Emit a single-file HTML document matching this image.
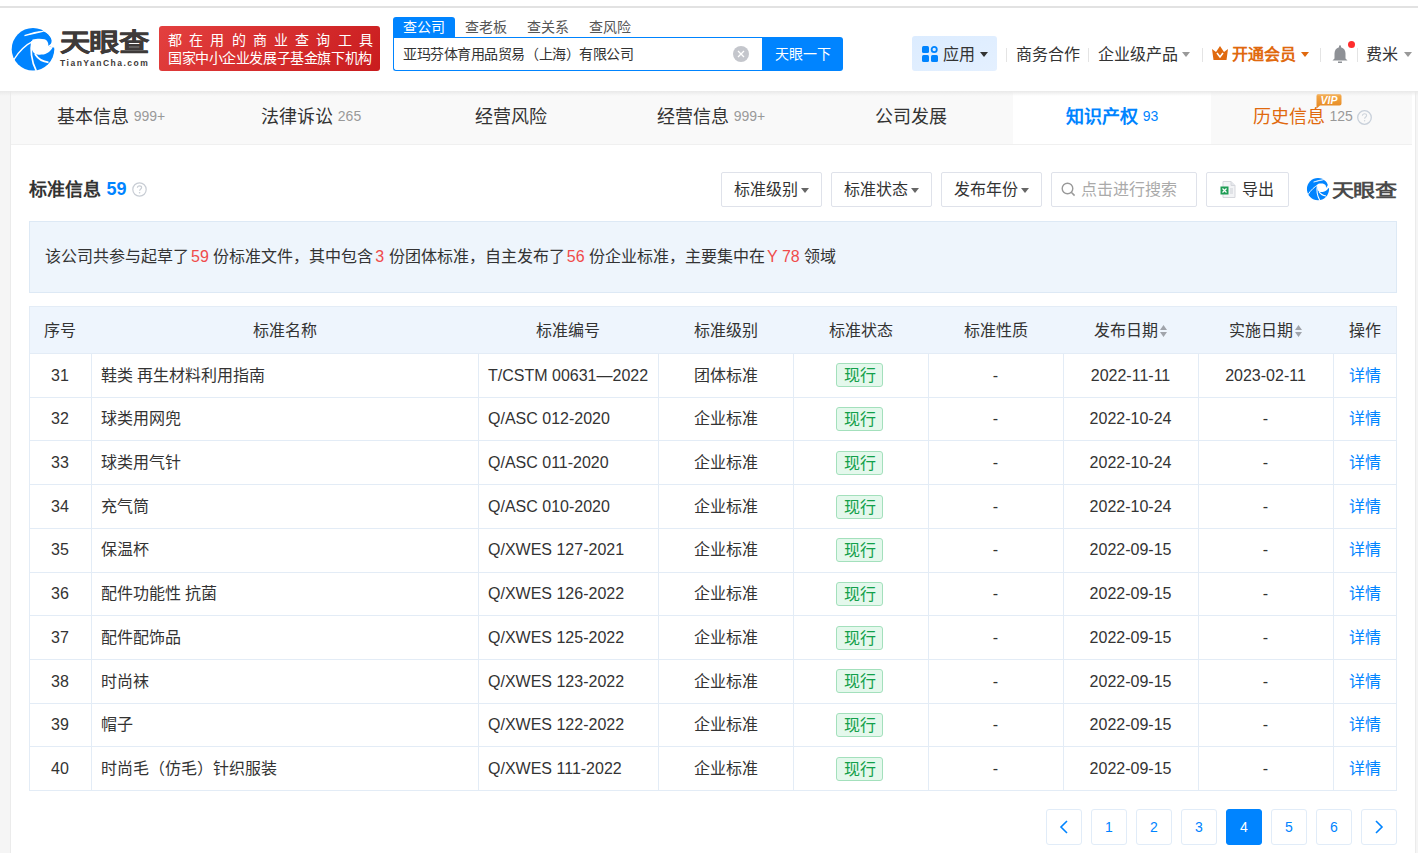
<!DOCTYPE html>
<html lang="zh-CN"><head><meta charset="utf-8">
<style>
*{box-sizing:border-box;margin:0;padding:0}
html,body{width:1418px;height:853px;overflow:hidden;background:#f5f5f5;font-family:"Liberation Sans",sans-serif;color:#333}
.abs{position:absolute}
#top{position:absolute;left:0;top:0;width:1418px;height:6px;background:#fff}
#topline{position:absolute;left:0;top:6px;width:1418px;height:2px;background:#e2e2e2}
#header{position:absolute;left:0;top:8px;width:1418px;height:83px;background:#fff}
#hshadow{position:absolute;left:0;top:91px;width:1418px;height:5px;background:linear-gradient(#e9e9e9,rgba(240,240,240,0));z-index:5}
#card{position:absolute;left:10px;top:91px;width:1406px;height:800px;background:#fff;border-left:1px solid #ebebeb;border-right:1px solid #ebebeb}
#tabs{position:absolute;left:11px;top:91px;width:1401px;height:54px;background:#f9f9f9;border-bottom:1px solid #f0f0f0}
.tab{position:absolute;top:0;height:53px;width:200px;text-align:center;line-height:52px;font-size:18px;color:#333;white-space:nowrap}
.tab .n{font-size:14px;color:#999;margin-left:5px;position:relative;top:-2px}
.tab.act{background:#fff;color:#0084ff;font-weight:bold}
.tab.act .n{color:#0084ff;font-weight:normal}
.fbtn{position:absolute;top:172px;height:35px;border:1px solid #dfe2ea;border-radius:2px;background:#fff;font-size:16px;line-height:34px;color:#333;text-align:center;white-space:nowrap}
.fbtn svg{vertical-align:middle;margin-left:3px;position:relative;top:0px}
.red{color:#f04b4b;margin-left:-2.4px}
.th{position:absolute;top:306.7px;height:47px;line-height:47px;text-align:center;font-size:16px;color:#333;white-space:nowrap}
.th .sort{vertical-align:middle;margin-left:2.5px;position:relative;top:-0.5px}
.hl{position:absolute;left:29px;width:1368px;height:1px;background:#e3ecf6}
.vl{position:absolute;width:1px;background:#e3ecf6}
.td{position:absolute;text-align:center;font-size:16px;color:#333;white-space:nowrap;margin-top:0.7px}
.td.tl{text-align:left;padding-left:10px}
.badge{display:inline-block;width:47px;height:24px;line-height:24px;border:1px solid #a3e0bc;background:#e4f8ec;border-radius:3px;color:#12a04a;font-size:16px;vertical-align:middle;position:relative;top:-1px;left:-1px}
.lnk{color:#0084ff}
.pg{position:absolute;top:809px;width:36px;height:36px;border:1px solid #e1ecf8;border-radius:3px;background:#fff;color:#0084ff;font-size:14px;line-height:34px;text-align:center}
.pg svg{vertical-align:middle;position:relative;top:-1px}
.pg.act{background:#0084ff;color:#fff;border-color:#0084ff}
</style></head>
<body>
<div id="top"></div><div id="topline"></div>
<div id="header">
  <svg class="abs" style="left:8px;top:16px" width="50" height="50" viewBox="0 0 50 50">
    <circle cx="25" cy="25.2" r="21.3" fill="#0084ff"/>
    <path d="M35.2 7.3 C40 9 43.3 12.5 43.6 16.5 C43.8 19 42.5 20.8 40.4 21.7 L44.6 23.4 L49 23.4 L49 3 L35.2 3 Z" fill="#fff"/>
    <path d="M24.6 15.5 C28 14.6 33 14.3 36.5 15.2 C39 16 40.5 18 40.4 21.7 L44.6 23.4 C42.5 27.5 38.5 30.2 34 30.6 C31 30.8 28.5 30.5 27.3 30.2 C25 28.5 23.4 26 23.4 22 C23.4 19.5 23.8 17 24.6 15.5 Z" fill="#fff"/>
    <path d="M16.5 11.6 C23 9.2 29 7.6 35.5 7.2 C29 8.6 23 10.2 16.5 11.6 Z" stroke="#fff" stroke-width="1.1" fill="#fff"/>
    <path d="M25.8 16.8 C19 20 11 27 5.6 36" stroke="#fff" stroke-width="1.4" fill="none"/>
    <path d="M24 17.2 C22.3 25 23 37 28.3 46.8" stroke="#fff" stroke-width="1.7" fill="none"/>
    <path d="M27 30 C30 34.8 35 37.8 40.5 38.3" stroke="#fff" stroke-width="1.8" fill="none"/>
  </svg>
  <div class="abs" id="logotxt" style="left:59.6px;top:21.4px;font-size:30px;font-weight:900;-webkit-text-stroke:0.5px #3e3a39;color:#3e3a39;line-height:34px;letter-spacing:-1px;transform:scale(1.0115,0.828);transform-origin:0 0">天眼查</div>
  <div class="abs" id="logocom" style="left:60px;top:50px;font-size:8.5px;font-weight:bold;color:#3e3a39;line-height:10px;letter-spacing:1.5px">TianYanCha.com</div>
  <div class="abs" id="banner" style="left:159px;top:18px;width:221px;height:45px;border-radius:3px;background:linear-gradient(135deg,#e3403f,#c91c1e)">
    <div class="abs" style="left:9px;top:5.5px;font-size:14px;line-height:17px;color:#fff;letter-spacing:7.2px;font-weight:500;white-space:nowrap">都在用的商业查询工具</div>
    <div class="abs" style="left:9px;top:24.3px;font-size:14px;letter-spacing:-0.42px;line-height:17px;color:#fff;font-weight:500;white-space:nowrap">国家中小企业发展子基金旗下机构</div>
  </div>
  <div class="abs" style="left:393px;top:9px;width:62px;height:20px;background:#0084ff;border-radius:3px 3px 0 0;color:#fff;font-size:14px;line-height:20px;text-align:center">查公司</div>
  <div class="abs" style="left:465px;top:9px;font-size:14px;line-height:20px;color:#555">查老板</div>
  <div class="abs" style="left:527px;top:9px;font-size:14px;line-height:20px;color:#555">查关系</div>
  <div class="abs" style="left:589px;top:9px;font-size:14px;line-height:20px;color:#555">查风险</div>
  <div class="abs" style="left:393px;top:29px;width:370px;height:34px;border:1px solid #0084ff;border-right:none;border-radius:0 0 0 3px;background:#fff">
    <div class="abs" style="left:9px;top:0;font-size:14px;letter-spacing:-0.45px;line-height:32px;color:#333;white-space:nowrap">亚玛芬体育用品贸易（上海）有限公司</div>
    <div class="abs" style="left:339px;top:8px;width:16px;height:16px;border-radius:50%;background:#c4c6cc"></div>
    <svg class="abs" style="left:339px;top:8px" width="16" height="16" viewBox="0 0 16 16"><path d="M5 5L11 11M11 5L5 11" stroke="#fff" stroke-width="1.3"/></svg>
  </div>
  <div class="abs" style="left:762px;top:29px;width:81px;height:34px;background:#0084ff;border-radius:0 3px 3px 0;color:#fff;font-size:14px;line-height:34px;text-align:center">天眼一下</div>

  <div class="abs" style="left:912px;top:28px;width:85px;height:35px;border-radius:3px;background:linear-gradient(160deg,#dcecff,#e4f0ff)"></div>
  <svg class="abs" style="left:922px;top:38px" width="16" height="16" viewBox="0 0 16 16">
    <rect x="0" y="0" width="7" height="7" rx="1.5" fill="#0084ff"/>
    <circle cx="12.2" cy="3.5" r="2.6" fill="none" stroke="#0084ff" stroke-width="1.8"/>
    <rect x="0" y="9" width="7" height="7" rx="1.5" fill="#0084ff"/>
    <rect x="9" y="9" width="7" height="7" rx="1.5" fill="#0084ff"/>
  </svg>
  <div class="abs" style="left:943px;top:35.5px;font-size:16px;line-height:22px;color:#333">应用</div>
  <svg class="abs" style="left:980px;top:44px" width="8" height="5" viewBox="0 0 8 5"><path d="M0 0H8L4 5Z" fill="#333"/></svg>
  <div class="abs" style="left:1006px;top:40px;width:1px;height:14px;background:#e4e4e4"></div>
  <div class="abs" style="left:1016px;top:35.5px;font-size:16px;line-height:22px;color:#333">商务合作</div>
  <div class="abs" style="left:1088px;top:40px;width:1px;height:14px;background:#e4e4e4"></div>
  <div class="abs" style="left:1098px;top:35.5px;font-size:16px;line-height:22px;color:#333">企业级产品</div>
  <svg class="abs" style="left:1182px;top:44px" width="8" height="5" viewBox="0 0 8 5"><path d="M0 0H8L4 5Z" fill="#999"/></svg>
  <div class="abs" style="left:1202px;top:40px;width:1px;height:14px;background:#e4e4e4"></div>
  <svg class="abs" style="left:1212px;top:38px" width="16" height="14" viewBox="0 0 16 14">
    <path d="M0 3L4 6L8 0L12 6L16 3L14.5 14H1.5Z" fill="#e0690e"/>
    <path d="M5 7L8 11L11 7" stroke="#fff" stroke-width="1.6" fill="none"/>
  </svg>
  <div class="abs" style="left:1232px;top:35.5px;font-size:16px;line-height:22px;color:#e0690e;font-weight:bold">开通会员</div>
  <svg class="abs" style="left:1301px;top:44px" width="8" height="5" viewBox="0 0 8 5"><path d="M0 0H8L4 5Z" fill="#e0690e"/></svg>
  <div class="abs" style="left:1320px;top:40px;width:1px;height:14px;background:#e4e4e4"></div>
  <svg class="abs" style="left:1332px;top:37px" width="16" height="18" viewBox="0 0 16 18">
    <path d="M7 0.5H9V2.2C12 3 13.5 5.5 13.5 8.5V13.5L15.5 15.5H0.5L2.5 13.5V8.5C2.5 5.5 4 3 7 2.2Z" fill="#8e9196"/>
    <rect x="6" y="16.5" width="4" height="1.5" fill="#8e9196"/>
  </svg>
  <div class="abs" style="left:1348px;top:33px;width:7px;height:7px;border-radius:50%;background:#ff2d2d"></div>
  <div class="abs" style="left:1357px;top:40px;width:1px;height:14px;background:#e4e4e4"></div>
  <div class="abs" style="left:1366px;top:35.5px;font-size:16px;line-height:22px;color:#333">费米</div>
  <svg class="abs" style="left:1404px;top:44px" width="8" height="5" viewBox="0 0 8 5"><path d="M0 0H8L4 5Z" fill="#999"/></svg>
</div>
<div id="card"></div>
<div id="tabs">
  <div class="tab" style="left:0">基本信息<span class="n">999+</span></div>
  <div class="tab" style="left:200px">法律诉讼<span class="n">265</span></div>
  <div class="tab" style="left:400px">经营风险</div>
  <div class="tab" style="left:600px">经营信息<span class="n">999+</span></div>
  <div class="tab" style="left:800px">公司发展</div>
  <div class="tab act" style="left:1002px;width:198px">知识产权<span class="n">93</span></div>
  <div class="tab" style="left:1200px;color:#e0690e;text-align:left;padding-left:41.5px">历史信息<span class="n">125</span><svg style="position:absolute;left:145.5px;top:18.5px" width="15" height="15" viewBox="0 0 15 15"><circle cx="7.5" cy="7.5" r="6.8" fill="none" stroke="#c8d0da" stroke-width="1.3"/><path d="M5.4 5.8C5.4 4.6 6.3 3.8 7.5 3.8C8.7 3.8 9.6 4.6 9.6 5.6C9.6 6.9 7.6 7.1 7.6 8.8" stroke="#cfd5dc" stroke-width="1.1" fill="none"/><circle cx="7.6" cy="10.8" r="0.7" fill="#cfd5dc"/></svg>
  <svg style="position:absolute;left:104px;top:3px" width="27" height="15" viewBox="0 0 27 15"><defs><linearGradient id="vg" x1="0" y1="0" x2="0" y2="1"><stop offset="0" stop-color="#f5aa4a"/><stop offset="1" stop-color="#e4861f"/></linearGradient></defs><path d="M3 0H24.5Q26.5 0 26.5 2V9.5Q26.5 11.5 24.5 11.5H5L1.5 14.5V2Q1.5 0 3 0Z" fill="url(#vg)"/><text x="14" y="9.6" text-anchor="middle" font-family="Liberation Sans" font-weight="bold" font-style="italic" font-size="10.5" fill="#fff">VIP</text></svg></div>
</div>
<div class="abs" style="left:28.5px;top:177.5px;font-size:18px;font-weight:bold;line-height:24px;color:#333;white-space:nowrap">标准信息</div>
<div class="abs" style="left:106.5px;top:176.5px;font-size:18px;font-weight:bold;line-height:24px;color:#0084ff">59</div>
<svg class="abs" style="left:131.5px;top:181.5px" width="15" height="15" viewBox="0 0 15 15"><circle cx="7.5" cy="7.5" r="6.7" fill="none" stroke="#c8cdd4" stroke-width="1.2"/><path d="M5.4 5.8C5.4 4.6 6.3 3.8 7.5 3.8C8.7 3.8 9.6 4.6 9.6 5.6C9.6 6.9 7.6 7.1 7.6 8.8" stroke="#c8cdd4" stroke-width="1.2" fill="none"/><circle cx="7.6" cy="10.8" r="0.8" fill="#c8cdd4"/></svg>

<div class="fbtn" style="left:721px;width:101px">标准级别<svg width="8" height="5" viewBox="0 0 8 5"><path d="M0 0H8L4 5Z" fill="#666"/></svg></div>
<div class="fbtn" style="left:831px;width:101px">标准状态<svg width="8" height="5" viewBox="0 0 8 5"><path d="M0 0H8L4 5Z" fill="#666"/></svg></div>
<div class="fbtn" style="left:941px;width:101px">发布年份<svg width="8" height="5" viewBox="0 0 8 5"><path d="M0 0H8L4 5Z" fill="#666"/></svg></div>
<div class="abs" style="left:1051px;top:172px;width:146px;height:35px;border:1px solid #dfe2ea;border-radius:2px;background:#fff"></div>
<svg class="abs" style="left:1061px;top:182px" width="15" height="15" viewBox="0 0 15 15"><circle cx="6.5" cy="6.5" r="5.3" fill="none" stroke="#999" stroke-width="1.4"/><path d="M10.3 10.3L13.6 13.6" stroke="#999" stroke-width="1.5"/></svg>
<div class="abs" style="left:1081px;top:179px;font-size:16px;line-height:22px;color:#aaa;white-space:nowrap">点击进行搜索</div>
<div class="abs" style="left:1206px;top:172px;width:83px;height:35px;border:1px solid #dfe2ea;border-radius:2px;background:#fff"></div>
<svg class="abs" style="left:1220px;top:181px" width="16" height="17" viewBox="0 0 16 17">
  <path d="M3 0.5H11L15 4.5V16.5H3Z" fill="#f3f4f6" stroke="#d5d7dc" stroke-width="1"/>
  <path d="M11 0.5V4.5H15" fill="#e4e6ea" stroke="#d5d7dc" stroke-width="1"/>
  <rect x="0.5" y="5.5" width="8" height="8" fill="#1f9d55"/>
  <path d="M2.5 7.5L6.5 11.5M6.5 7.5L2.5 11.5" stroke="#fff" stroke-width="1.2"/>
  <path d="M10 8H13M10 10H13M10 12H13" stroke="#c9ccd2" stroke-width="0.9"/>
</svg>
<div class="abs" style="left:1242px;top:179px;font-size:16px;line-height:22px;color:#333">导出</div>
<svg class="abs" style="left:1305px;top:176px" width="26" height="26" viewBox="0 0 50 50">
    <circle cx="25" cy="25.2" r="21.3" fill="#0084ff"/>
    <path d="M35.2 7.3 C40 9 43.3 12.5 43.6 16.5 C43.8 19 42.5 20.8 40.4 21.7 L44.6 23.4 L49 23.4 L49 3 L35.2 3 Z" fill="#fff"/>
    <path d="M24.6 15.5 C28 14.6 33 14.3 36.5 15.2 C39 16 40.5 18 40.4 21.7 L44.6 23.4 C42.5 27.5 38.5 30.2 34 30.6 C31 30.8 28.5 30.5 27.3 30.2 C25 28.5 23.4 26 23.4 22 C23.4 19.5 23.8 17 24.6 15.5 Z" fill="#fff"/>
    <path d="M16.5 11.6 C23 9.2 29 7.6 35.5 7.2 C29 8.6 23 10.2 16.5 11.6 Z" stroke="#fff" stroke-width="1.1" fill="#fff"/>
    <path d="M25.8 16.8 C19 20 11 27 5.6 36" stroke="#fff" stroke-width="1.8" fill="none"/>
    <path d="M24 17.2 C22.3 25 23 37 28.3 46.8" stroke="#fff" stroke-width="2" fill="none"/>
    <path d="M27 30 C30 34.8 35 37.8 40.5 38.3" stroke="#fff" stroke-width="2" fill="none"/>
</svg>
<div class="abs" id="logo2" style="left:1332px;top:179.5px;font-size:22px;font-weight:900;line-height:26px;color:#4a4a4a;letter-spacing:-0.6px;transform:scale(1.0,0.85);transform-origin:0 0;white-space:nowrap">天眼查</div>

<div class="abs" style="left:29px;top:221px;width:1368px;height:72px;background:#eef5fc;border:1px solid #dde9f5"></div>
<div class="abs" style="left:45px;top:246px;font-size:16px;line-height:22px;color:#333;white-space:nowrap">该公司共参与起草了 <span class="red">59</span> 份标准文件，其中包含 <span class="red">3</span> 份团体标准，自主发布了 <span class="red">56</span> 份企业标准，主要集中在 <span class="red">Y 78</span> 领域</div>

<div class="abs" style="left:29px;top:306px;width:1368px;height:47px;background:#eef5fd"></div>
<div class="th" style="left:29px;width:62px">序号</div>
<div class="th" style="left:91px;width:387px">标准名称</div>
<div class="th" style="left:478px;width:180px">标准编号</div>
<div class="th" style="left:658px;width:135px">标准级别</div>
<div class="th" style="left:793px;width:135px">标准状态</div>
<div class="th" style="left:928px;width:135px">标准性质</div>
<div class="th" style="left:1063px;width:135px">发布日期<svg class="sort" width="7" height="12" viewBox="0 0 7 12"><path d="M3.5 0L7 5H0Z M3.5 12L7 7H0Z" fill="#a0a4ab"/></svg></div>
<div class="th" style="left:1198px;width:135px">实施日期<svg class="sort" width="7" height="12" viewBox="0 0 7 12"><path d="M3.5 0L7 5H0Z M3.5 12L7 7H0Z" fill="#a0a4ab"/></svg></div>
<div class="th" style="left:1333px;width:63px">操作</div>
<div class="hl" style="top:306px"></div>
<div class="hl" style="top:353.00px"></div>
<div class="hl" style="top:396.70px"></div>
<div class="hl" style="top:440.40px"></div>
<div class="hl" style="top:484.10px"></div>
<div class="hl" style="top:527.80px"></div>
<div class="hl" style="top:571.50px"></div>
<div class="hl" style="top:615.20px"></div>
<div class="hl" style="top:658.90px"></div>
<div class="hl" style="top:702.60px"></div>
<div class="hl" style="top:746.30px"></div>
<div class="hl" style="top:790.00px"></div>
<div class="vl" style="left:29px;top:306px;height:485.00px"></div>
<div class="vl" style="left:91px;top:353px;height:438.00px"></div>
<div class="vl" style="left:478px;top:353px;height:438.00px"></div>
<div class="vl" style="left:658px;top:353px;height:438.00px"></div>
<div class="vl" style="left:793px;top:353px;height:438.00px"></div>
<div class="vl" style="left:928px;top:353px;height:438.00px"></div>
<div class="vl" style="left:1063px;top:353px;height:438.00px"></div>
<div class="vl" style="left:1198px;top:353px;height:438.00px"></div>
<div class="vl" style="left:1333px;top:353px;height:438.00px"></div>
<div class="vl" style="left:1396px;top:306px;height:485.00px"></div>
<div class="td" style="left:29px;width:62.0px;top:353.00px;height:43.7px;line-height:43.7px">31</div>
<div class="td tl" style="left:91px;width:387.0px;top:353.00px;height:43.7px;line-height:43.7px">鞋类 再生材料利用指南</div>
<div class="td tl" style="left:478px;width:180.0px;top:353.00px;height:43.7px;line-height:43.7px">T/CSTM 00631—2022</div>
<div class="td" style="left:658px;width:135.0px;top:353.00px;height:43.7px;line-height:43.7px">团体标准</div>
<div class="td" style="left:793px;width:135.0px;top:353.00px;height:43.7px;line-height:43.7px"><span class="badge">现行</span></div>
<div class="td" style="left:928px;width:135.0px;top:353.00px;height:43.7px;line-height:43.7px">-</div>
<div class="td" style="left:1063px;width:135.0px;top:353.00px;height:43.7px;line-height:43.7px">2022-11-11</div>
<div class="td" style="left:1198px;width:135.0px;top:353.00px;height:43.7px;line-height:43.7px">2023-02-11</div>
<div class="td" style="left:1333px;width:63.0px;top:353.00px;height:43.7px;line-height:43.7px"><span class="lnk">详情</span></div>
<div class="td" style="left:29px;width:62.0px;top:396.70px;height:43.7px;line-height:43.7px">32</div>
<div class="td tl" style="left:91px;width:387.0px;top:396.70px;height:43.7px;line-height:43.7px">球类用网兜</div>
<div class="td tl" style="left:478px;width:180.0px;top:396.70px;height:43.7px;line-height:43.7px">Q/ASC 012-2020</div>
<div class="td" style="left:658px;width:135.0px;top:396.70px;height:43.7px;line-height:43.7px">企业标准</div>
<div class="td" style="left:793px;width:135.0px;top:396.70px;height:43.7px;line-height:43.7px"><span class="badge">现行</span></div>
<div class="td" style="left:928px;width:135.0px;top:396.70px;height:43.7px;line-height:43.7px">-</div>
<div class="td" style="left:1063px;width:135.0px;top:396.70px;height:43.7px;line-height:43.7px">2022-10-24</div>
<div class="td" style="left:1198px;width:135.0px;top:396.70px;height:43.7px;line-height:43.7px">-</div>
<div class="td" style="left:1333px;width:63.0px;top:396.70px;height:43.7px;line-height:43.7px"><span class="lnk">详情</span></div>
<div class="td" style="left:29px;width:62.0px;top:440.40px;height:43.7px;line-height:43.7px">33</div>
<div class="td tl" style="left:91px;width:387.0px;top:440.40px;height:43.7px;line-height:43.7px">球类用气针</div>
<div class="td tl" style="left:478px;width:180.0px;top:440.40px;height:43.7px;line-height:43.7px">Q/ASC 011-2020</div>
<div class="td" style="left:658px;width:135.0px;top:440.40px;height:43.7px;line-height:43.7px">企业标准</div>
<div class="td" style="left:793px;width:135.0px;top:440.40px;height:43.7px;line-height:43.7px"><span class="badge">现行</span></div>
<div class="td" style="left:928px;width:135.0px;top:440.40px;height:43.7px;line-height:43.7px">-</div>
<div class="td" style="left:1063px;width:135.0px;top:440.40px;height:43.7px;line-height:43.7px">2022-10-24</div>
<div class="td" style="left:1198px;width:135.0px;top:440.40px;height:43.7px;line-height:43.7px">-</div>
<div class="td" style="left:1333px;width:63.0px;top:440.40px;height:43.7px;line-height:43.7px"><span class="lnk">详情</span></div>
<div class="td" style="left:29px;width:62.0px;top:484.10px;height:43.7px;line-height:43.7px">34</div>
<div class="td tl" style="left:91px;width:387.0px;top:484.10px;height:43.7px;line-height:43.7px">充气筒</div>
<div class="td tl" style="left:478px;width:180.0px;top:484.10px;height:43.7px;line-height:43.7px">Q/ASC 010-2020</div>
<div class="td" style="left:658px;width:135.0px;top:484.10px;height:43.7px;line-height:43.7px">企业标准</div>
<div class="td" style="left:793px;width:135.0px;top:484.10px;height:43.7px;line-height:43.7px"><span class="badge">现行</span></div>
<div class="td" style="left:928px;width:135.0px;top:484.10px;height:43.7px;line-height:43.7px">-</div>
<div class="td" style="left:1063px;width:135.0px;top:484.10px;height:43.7px;line-height:43.7px">2022-10-24</div>
<div class="td" style="left:1198px;width:135.0px;top:484.10px;height:43.7px;line-height:43.7px">-</div>
<div class="td" style="left:1333px;width:63.0px;top:484.10px;height:43.7px;line-height:43.7px"><span class="lnk">详情</span></div>
<div class="td" style="left:29px;width:62.0px;top:527.80px;height:43.7px;line-height:43.7px">35</div>
<div class="td tl" style="left:91px;width:387.0px;top:527.80px;height:43.7px;line-height:43.7px">保温杯</div>
<div class="td tl" style="left:478px;width:180.0px;top:527.80px;height:43.7px;line-height:43.7px">Q/XWES 127-2021</div>
<div class="td" style="left:658px;width:135.0px;top:527.80px;height:43.7px;line-height:43.7px">企业标准</div>
<div class="td" style="left:793px;width:135.0px;top:527.80px;height:43.7px;line-height:43.7px"><span class="badge">现行</span></div>
<div class="td" style="left:928px;width:135.0px;top:527.80px;height:43.7px;line-height:43.7px">-</div>
<div class="td" style="left:1063px;width:135.0px;top:527.80px;height:43.7px;line-height:43.7px">2022-09-15</div>
<div class="td" style="left:1198px;width:135.0px;top:527.80px;height:43.7px;line-height:43.7px">-</div>
<div class="td" style="left:1333px;width:63.0px;top:527.80px;height:43.7px;line-height:43.7px"><span class="lnk">详情</span></div>
<div class="td" style="left:29px;width:62.0px;top:571.50px;height:43.7px;line-height:43.7px">36</div>
<div class="td tl" style="left:91px;width:387.0px;top:571.50px;height:43.7px;line-height:43.7px">配件功能性 抗菌</div>
<div class="td tl" style="left:478px;width:180.0px;top:571.50px;height:43.7px;line-height:43.7px">Q/XWES 126-2022</div>
<div class="td" style="left:658px;width:135.0px;top:571.50px;height:43.7px;line-height:43.7px">企业标准</div>
<div class="td" style="left:793px;width:135.0px;top:571.50px;height:43.7px;line-height:43.7px"><span class="badge">现行</span></div>
<div class="td" style="left:928px;width:135.0px;top:571.50px;height:43.7px;line-height:43.7px">-</div>
<div class="td" style="left:1063px;width:135.0px;top:571.50px;height:43.7px;line-height:43.7px">2022-09-15</div>
<div class="td" style="left:1198px;width:135.0px;top:571.50px;height:43.7px;line-height:43.7px">-</div>
<div class="td" style="left:1333px;width:63.0px;top:571.50px;height:43.7px;line-height:43.7px"><span class="lnk">详情</span></div>
<div class="td" style="left:29px;width:62.0px;top:615.20px;height:43.7px;line-height:43.7px">37</div>
<div class="td tl" style="left:91px;width:387.0px;top:615.20px;height:43.7px;line-height:43.7px">配件配饰品</div>
<div class="td tl" style="left:478px;width:180.0px;top:615.20px;height:43.7px;line-height:43.7px">Q/XWES 125-2022</div>
<div class="td" style="left:658px;width:135.0px;top:615.20px;height:43.7px;line-height:43.7px">企业标准</div>
<div class="td" style="left:793px;width:135.0px;top:615.20px;height:43.7px;line-height:43.7px"><span class="badge">现行</span></div>
<div class="td" style="left:928px;width:135.0px;top:615.20px;height:43.7px;line-height:43.7px">-</div>
<div class="td" style="left:1063px;width:135.0px;top:615.20px;height:43.7px;line-height:43.7px">2022-09-15</div>
<div class="td" style="left:1198px;width:135.0px;top:615.20px;height:43.7px;line-height:43.7px">-</div>
<div class="td" style="left:1333px;width:63.0px;top:615.20px;height:43.7px;line-height:43.7px"><span class="lnk">详情</span></div>
<div class="td" style="left:29px;width:62.0px;top:658.90px;height:43.7px;line-height:43.7px">38</div>
<div class="td tl" style="left:91px;width:387.0px;top:658.90px;height:43.7px;line-height:43.7px">时尚袜</div>
<div class="td tl" style="left:478px;width:180.0px;top:658.90px;height:43.7px;line-height:43.7px">Q/XWES 123-2022</div>
<div class="td" style="left:658px;width:135.0px;top:658.90px;height:43.7px;line-height:43.7px">企业标准</div>
<div class="td" style="left:793px;width:135.0px;top:658.90px;height:43.7px;line-height:43.7px"><span class="badge">现行</span></div>
<div class="td" style="left:928px;width:135.0px;top:658.90px;height:43.7px;line-height:43.7px">-</div>
<div class="td" style="left:1063px;width:135.0px;top:658.90px;height:43.7px;line-height:43.7px">2022-09-15</div>
<div class="td" style="left:1198px;width:135.0px;top:658.90px;height:43.7px;line-height:43.7px">-</div>
<div class="td" style="left:1333px;width:63.0px;top:658.90px;height:43.7px;line-height:43.7px"><span class="lnk">详情</span></div>
<div class="td" style="left:29px;width:62.0px;top:702.60px;height:43.7px;line-height:43.7px">39</div>
<div class="td tl" style="left:91px;width:387.0px;top:702.60px;height:43.7px;line-height:43.7px">帽子</div>
<div class="td tl" style="left:478px;width:180.0px;top:702.60px;height:43.7px;line-height:43.7px">Q/XWES 122-2022</div>
<div class="td" style="left:658px;width:135.0px;top:702.60px;height:43.7px;line-height:43.7px">企业标准</div>
<div class="td" style="left:793px;width:135.0px;top:702.60px;height:43.7px;line-height:43.7px"><span class="badge">现行</span></div>
<div class="td" style="left:928px;width:135.0px;top:702.60px;height:43.7px;line-height:43.7px">-</div>
<div class="td" style="left:1063px;width:135.0px;top:702.60px;height:43.7px;line-height:43.7px">2022-09-15</div>
<div class="td" style="left:1198px;width:135.0px;top:702.60px;height:43.7px;line-height:43.7px">-</div>
<div class="td" style="left:1333px;width:63.0px;top:702.60px;height:43.7px;line-height:43.7px"><span class="lnk">详情</span></div>
<div class="td" style="left:29px;width:62.0px;top:746.30px;height:43.7px;line-height:43.7px">40</div>
<div class="td tl" style="left:91px;width:387.0px;top:746.30px;height:43.7px;line-height:43.7px">时尚毛（仿毛）针织服装</div>
<div class="td tl" style="left:478px;width:180.0px;top:746.30px;height:43.7px;line-height:43.7px">Q/XWES 111-2022</div>
<div class="td" style="left:658px;width:135.0px;top:746.30px;height:43.7px;line-height:43.7px">企业标准</div>
<div class="td" style="left:793px;width:135.0px;top:746.30px;height:43.7px;line-height:43.7px"><span class="badge">现行</span></div>
<div class="td" style="left:928px;width:135.0px;top:746.30px;height:43.7px;line-height:43.7px">-</div>
<div class="td" style="left:1063px;width:135.0px;top:746.30px;height:43.7px;line-height:43.7px">2022-09-15</div>
<div class="td" style="left:1198px;width:135.0px;top:746.30px;height:43.7px;line-height:43.7px">-</div>
<div class="td" style="left:1333px;width:63.0px;top:746.30px;height:43.7px;line-height:43.7px"><span class="lnk">详情</span></div>
<div class="pg" style="left:1046px"><svg width="10" height="14" viewBox="0 0 10 14"><path d="M8 1L2 7L8 13" stroke="#0084ff" stroke-width="1.6" fill="none"/></svg></div>
<div class="pg" style="left:1091px">1</div>
<div class="pg" style="left:1136px">2</div>
<div class="pg" style="left:1181px">3</div>
<div class="pg act" style="left:1226px">4</div>
<div class="pg" style="left:1271px">5</div>
<div class="pg" style="left:1316px">6</div>
<div class="pg" style="left:1361px"><svg width="10" height="14" viewBox="0 0 10 14"><path d="M2 1L8 7L2 13" stroke="#0084ff" stroke-width="1.6" fill="none"/></svg></div>
<div id="hshadow"></div>
</body></html>
